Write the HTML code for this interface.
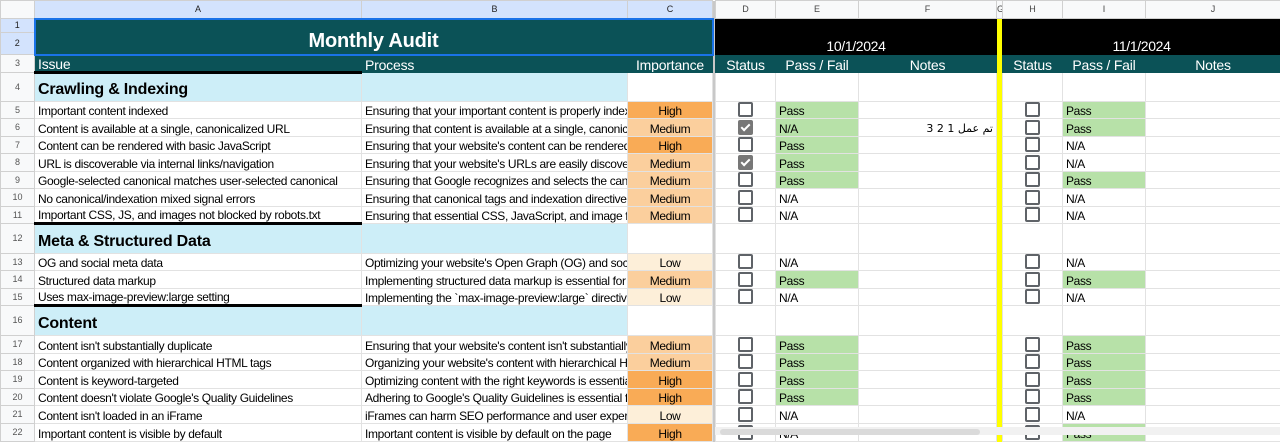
<!DOCTYPE html>
<html><head><meta charset="utf-8"><style>
body{margin:0;width:1280px;height:435px;overflow:hidden;background:#fff;font-family:"Liberation Sans",Arial,sans-serif;}
table{border-collapse:collapse;table-layout:fixed;width:1280px;}
td{padding:0 3px;border:1px solid #e2e2e2;font-size:12px;color:#000;white-space:nowrap;overflow:hidden;vertical-align:bottom;line-height:14px;letter-spacing:-0.35px;}
.rh{background:#f8f9fa;color:#555;font-size:9px;line-height:11px;text-align:center;vertical-align:middle;border-color:#d0d0d0;padding:0;letter-spacing:0}
.rhs{background:#d3e3fd;color:#222}
.ch{background:#f8f9fa;color:#444;font-size:9px;line-height:11px;text-align:center;vertical-align:middle;border-color:#d0d0d0;padding:0;letter-spacing:0}
.chs{background:#d3e3fd;color:#222}
.gap{background:#c8c8c8;border:none;padding:0}
.yel{background:#ffff00;border:none;padding:0}
.teal{background:#0b5257;color:#fff;font-size:14px;border-color:#0b5257;letter-spacing:-0.2px}
.black{background:#000;color:#fff;font-size:14px;text-align:center;border-color:#000;vertical-align:bottom;line-height:16px}
.c{text-align:center}
.sec{background:#cdeef8;font-weight:bold;font-size:16px;padding-bottom:2px;line-height:18px;letter-spacing:-0.2px}
.secb{background:#cdeef8}
.hi{background:#f9ab56;text-align:center}
.me{background:#fbcf9d;text-align:center}
.lo{background:#fdefd9;text-align:center}
.ps{background:#b7e1a8}
.tb{border-bottom:3px solid #000}
.cb{display:inline-block;width:11px;height:11px;border:2px solid #5f6368;border-radius:2px;vertical-align:middle;margin-bottom:1px;box-sizing:content-box}
.ck{background:#777;border-color:#777;position:relative}
.ck:after{content:"";position:absolute;left:3px;top:0px;width:3px;height:7px;border:solid #fff;border-width:0 2px 2px 0;transform:rotate(45deg)}
</style></head><body>
<table>
<colgroup><col style="width:34px"><col style="width:327px"><col style="width:266px"><col style="width:85px"><col style="width:3px"><col style="width:60px"><col style="width:83px"><col style="width:138px"><col style="width:6px"><col style="width:60px"><col style="width:83px"><col style="width:135px"></colgroup>
<tr style="height:18px"><td class="ch"></td><td class="ch chs">A</td><td class="ch chs">B</td><td class="ch chs">C</td><td class="gap"></td><td class="ch">D</td><td class="ch">E</td><td class="ch">F</td><td class="ch">G</td><td class="ch">H</td><td class="ch">I</td><td class="ch">J</td></tr>
<tr style="height:14px"><td class="rh rhs">1</td><td colspan="3" rowspan="2" class="teal c" style="font-size:20px;font-weight:bold;line-height:22px;border:2px solid #1a73e8;vertical-align:bottom;padding-bottom:2px">Monthly Audit</td><td class="gap" rowspan="2"></td><td colspan="3" rowspan="2" class="black">10/1/2024</td><td class="yel"></td><td colspan="3" rowspan="2" class="black">11/1/2024</td></tr>
<tr style="height:22px"><td class="rh rhs">2</td><td class="yel"></td></tr>
<tr style="height:18px"><td class="rh">3</td><td class="teal tb">Issue</td><td class="teal">Process</td><td class="teal c">Importance</td><td class="gap"></td><td class="teal c">Status</td><td class="teal c">Pass / Fail</td><td class="teal c">Notes</td><td class="yel"></td><td class="teal c">Status</td><td class="teal c">Pass / Fail</td><td class="teal c">Notes</td></tr>
<tr style="height:29px"><td class="rh">4</td><td class="sec">Crawling &amp; Indexing</td><td class="secb"></td><td></td><td class="gap"></td><td></td><td></td><td></td><td class="yel"></td><td></td><td></td><td></td></tr>
<tr style="height:17px"><td class="rh">5</td><td>Important content indexed</td><td>Ensuring that your important content is properly indexed</td><td class="hi">High</td><td class="gap"></td><td class="c"><span class="cb"></span></td><td class="ps">Pass</td><td></td><td class="yel"></td><td class="c"><span class="cb"></span></td><td class="ps">Pass</td><td></td></tr>
<tr style="height:18px"><td class="rh">6</td><td>Content is available at a single, canonicalized URL</td><td>Ensuring that content is available at a single, canonicalized</td><td class="me">Medium</td><td class="gap"></td><td class="c"><span class="cb ck"></span></td><td class="ps">N/A</td><td style="text-align:right;font-family:'DejaVu Sans',sans-serif;font-size:11px;letter-spacing:0">تم عمل 1 2 3</td><td class="yel"></td><td class="c"><span class="cb"></span></td><td class="ps">Pass</td><td></td></tr>
<tr style="height:17px"><td class="rh">7</td><td>Content can be rendered with basic JavaScript</td><td>Ensuring that your website's content can be rendered</td><td class="hi">High</td><td class="gap"></td><td class="c"><span class="cb"></span></td><td class="ps">Pass</td><td></td><td class="yel"></td><td class="c"><span class="cb"></span></td><td>N/A</td><td></td></tr>
<tr style="height:18px"><td class="rh">8</td><td>URL is discoverable via internal links/navigation</td><td>Ensuring that your website's URLs are easily discoverable</td><td class="me">Medium</td><td class="gap"></td><td class="c"><span class="cb ck"></span></td><td class="ps">Pass</td><td></td><td class="yel"></td><td class="c"><span class="cb"></span></td><td>N/A</td><td></td></tr>
<tr style="height:17px"><td class="rh">9</td><td>Google-selected canonical matches user-selected canonical</td><td>Ensuring that Google recognizes and selects the canonical</td><td class="me">Medium</td><td class="gap"></td><td class="c"><span class="cb"></span></td><td class="ps">Pass</td><td></td><td class="yel"></td><td class="c"><span class="cb"></span></td><td class="ps">Pass</td><td></td></tr>
<tr style="height:18px"><td class="rh">10</td><td>No canonical/indexation mixed signal errors</td><td>Ensuring that canonical tags and indexation directives</td><td class="me">Medium</td><td class="gap"></td><td class="c"><span class="cb"></span></td><td>N/A</td><td></td><td class="yel"></td><td class="c"><span class="cb"></span></td><td>N/A</td><td></td></tr>
<tr style="height:17px"><td class="rh">11</td><td class="tb">Important CSS, JS, and images not blocked by robots.txt</td><td>Ensuring that essential CSS, JavaScript, and image files</td><td class="me">Medium</td><td class="gap"></td><td class="c"><span class="cb"></span></td><td>N/A</td><td></td><td class="yel"></td><td class="c"><span class="cb"></span></td><td>N/A</td><td></td></tr>
<tr style="height:30px"><td class="rh">12</td><td class="sec">Meta &amp; Structured Data</td><td class="secb"></td><td></td><td class="gap"></td><td></td><td></td><td></td><td class="yel"></td><td></td><td></td><td></td></tr>
<tr style="height:17px"><td class="rh">13</td><td>OG and social meta data</td><td>Optimizing your website's Open Graph (OG) and social</td><td class="lo">Low</td><td class="gap"></td><td class="c"><span class="cb"></span></td><td>N/A</td><td></td><td class="yel"></td><td class="c"><span class="cb"></span></td><td>N/A</td><td></td></tr>
<tr style="height:18px"><td class="rh">14</td><td>Structured data markup</td><td>Implementing structured data markup is essential for</td><td class="me">Medium</td><td class="gap"></td><td class="c"><span class="cb"></span></td><td class="ps">Pass</td><td></td><td class="yel"></td><td class="c"><span class="cb"></span></td><td class="ps">Pass</td><td></td></tr>
<tr style="height:17px"><td class="rh">15</td><td class="tb">Uses max-image-preview:large setting</td><td>Implementing the `max-image-preview:large` directive</td><td class="lo">Low</td><td class="gap"></td><td class="c"><span class="cb"></span></td><td>N/A</td><td></td><td class="yel"></td><td class="c"><span class="cb"></span></td><td>N/A</td><td></td></tr>
<tr style="height:30px"><td class="rh">16</td><td class="sec">Content</td><td class="secb"></td><td></td><td class="gap"></td><td></td><td></td><td></td><td class="yel"></td><td></td><td></td><td></td></tr>
<tr style="height:18px"><td class="rh">17</td><td>Content isn't substantially duplicate</td><td>Ensuring that your website's content isn't substantially</td><td class="me">Medium</td><td class="gap"></td><td class="c"><span class="cb"></span></td><td class="ps">Pass</td><td></td><td class="yel"></td><td class="c"><span class="cb"></span></td><td class="ps">Pass</td><td></td></tr>
<tr style="height:17px"><td class="rh">18</td><td>Content organized with hierarchical HTML tags</td><td>Organizing your website's content with hierarchical HTML</td><td class="me">Medium</td><td class="gap"></td><td class="c"><span class="cb"></span></td><td class="ps">Pass</td><td></td><td class="yel"></td><td class="c"><span class="cb"></span></td><td class="ps">Pass</td><td></td></tr>
<tr style="height:18px"><td class="rh">19</td><td>Content is keyword-targeted</td><td>Optimizing content with the right keywords is essential</td><td class="hi">High</td><td class="gap"></td><td class="c"><span class="cb"></span></td><td class="ps">Pass</td><td></td><td class="yel"></td><td class="c"><span class="cb"></span></td><td class="ps">Pass</td><td></td></tr>
<tr style="height:17px"><td class="rh">20</td><td>Content doesn't violate Google's Quality Guidelines</td><td>Adhering to Google's Quality Guidelines is essential for</td><td class="hi">High</td><td class="gap"></td><td class="c"><span class="cb"></span></td><td class="ps">Pass</td><td></td><td class="yel"></td><td class="c"><span class="cb"></span></td><td class="ps">Pass</td><td></td></tr>
<tr style="height:18px"><td class="rh">21</td><td>Content isn't loaded in an iFrame</td><td>iFrames can harm SEO performance and user experience</td><td class="lo">Low</td><td class="gap"></td><td class="c"><span class="cb"></span></td><td>N/A</td><td></td><td class="yel"></td><td class="c"><span class="cb"></span></td><td>N/A</td><td></td></tr>
<tr style="height:18px"><td class="rh">22</td><td>Important content is visible by default</td><td>Important content is visible by default on the page</td><td class="hi">High</td><td class="gap"></td><td class="c"><span class="cb"></span></td><td>N/A</td><td></td><td class="yel"></td><td class="c"><span class="cb"></span></td><td class="ps">Pass</td><td></td></tr>
</table>
<div style="position:absolute;left:715px;top:427px;width:565px;height:8px;background:#f1f1f1"></div>
<div style="position:absolute;left:720px;top:429px;width:260px;height:6px;background:#dadada;border-radius:3px"></div>
</body></html>
